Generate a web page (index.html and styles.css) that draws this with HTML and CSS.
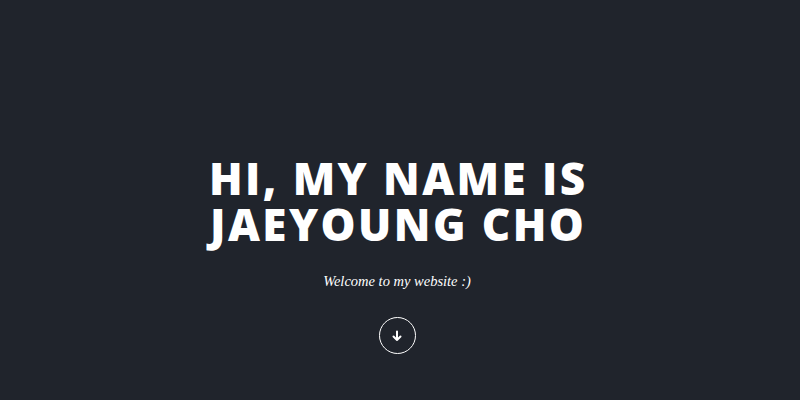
FILE: index.html
```html
<!DOCTYPE html>
<html>
<head>
<meta charset="utf-8">
<link rel="stylesheet" href="styles.css">
</head>
<body>
<main class="hero">
  <h1 class="title">HI, MY NAME IS<br>JAEYOUNG CHO</h1>
  <p class="subtitle">Welcome to my website :)</p>
  <a class="scroll" href="#">
    <svg width="14" height="14" viewBox="0 0 14 14" fill="none" stroke="#fff" stroke-width="2" stroke-linecap="round" stroke-linejoin="round"><path d="M7 2.5v8.5M3.5 7.5l3.5 3.5 3.5-3.5"/></svg>
  </a>
</main>
</body>
</html>
```
FILE: styles.css
```css
html, body {
  margin: 0;
  height: 100%;
}
body {
  background: #20242c;
  color: #fff;
}
.hero {
  height: 400px;
  box-sizing: border-box;
  padding: 155px 6px 0 0;
  display: flex;
  flex-direction: column;
  align-items: center;
}
.title {
  margin: 0;
  font-family: "Open Sans", sans-serif;
  font-weight: 800;
  font-size: 44px;
  line-height: 46px;
  letter-spacing: 0.055em;
  text-align: center;
  padding-left: 0.055em;
}
.subtitle {
  margin: 24px 0 0;
  font-family: "Liberation Serif", serif;
  font-style: italic;
  font-size: 14.5px;
  line-height: 20px;
}
.scroll {
  margin-top: 26px;
  width: 35px;
  height: 35px;
  border: 1.5px solid #fff;
  border-radius: 50%;
  display: flex;
  align-items: center;
  justify-content: center;
}
```
